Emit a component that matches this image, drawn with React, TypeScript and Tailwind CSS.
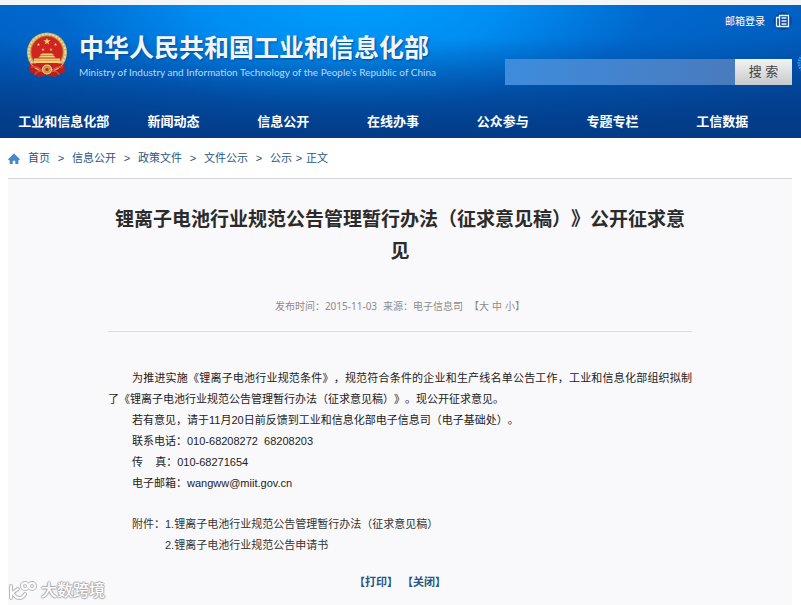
const NAV = ["工业和信息化部", "新闻动态", "信息公开", "在线办事", "公众参与", "专题专栏", "工信数据"];

const CRUMBS = ["首页", "信息公开", "政策文件", "文件公示", "公示"];

const ATTACHMENTS = [
  "1.锂离子电池行业规范公告管理暂行办法（征求意见稿）",
  "2.锂离子电池行业规范公告申请书",
];

const STAR = "0,-1 0.23,-0.31 0.95,-0.31 0.36,0.12 0.59,0.81 0,0.38 -0.59,0.81 -0.36,0.12 -0.95,-0.31 -0.23,-0.31";

function Emblem() {
  return (
    <svg viewBox="0 0 42 46" className="h-[46px] w-[42px] shrink-0" aria-hidden>
      <path d="M4 29 L3 40 L9 42 L13 45 L21 43 L29 45 L33 42 L39 40 L38 29Z" fill="#b81f1c" />
      <circle cx="21" cy="20.5" r="20" fill="#d3b069" />
      <circle cx="21" cy="20.5" r="18.3" fill="none" stroke="#efdfa8" strokeWidth="1.6" strokeDasharray="2 1.5" />
      <circle cx="21" cy="20" r="16" fill="#cf2420" stroke="#a8772b" strokeWidth="0.8" />
      <g fill="#f5cf78">
        <polygon points={STAR} transform="translate(21 9.5) scale(3.8)" />
        <polygon points={STAR} transform="translate(12.5 12.5) scale(1.7)" />
        <polygon points={STAR} transform="translate(29.5 12.5) scale(1.7)" />
        <polygon points={STAR} transform="translate(17 17.5) scale(1.7)" />
        <polygon points={STAR} transform="translate(25 17.5) scale(1.7)" />
        <path d="M14 23 L16 21.5 H26 L28 23Z" />
        <path d="M12.5 25.5 L14.5 23.5 H27.5 L29.5 25.5Z" />
        <path d="M8 26.5 H34 V31 H8Z" />
      </g>
      <path d="M8 28.5 H34" stroke="#dd9a4a" strokeWidth="0.8" />
      <path d="M5 31.5 H37 Q32 38 21 38 Q10 38 5 31.5Z" fill="#c4231f" />
      <circle cx="21" cy="37.5" r="4.5" fill="#cf9540" stroke="#ecd28a" strokeWidth="1.2" />
      <circle cx="21" cy="37.5" r="1.6" fill="#b5281d" />
      <path d="M5 35 Q12 34 15.5 39 Q10 39 9 43 M37 35 Q30 34 26.5 39 Q32 39 33 43" fill="none" stroke="#df4a30" strokeWidth="1.5" />
    </svg>
  );
}

function NewsIcon() {
  return (
    <svg viewBox="0 0 18 18" className="size-[18px]" fill="none" stroke="#e8f4ff" aria-hidden>
      <circle cx="9" cy="9" r="9" fill="#06489b" stroke="none" />
      <path d="M5.5 3.5 H14.5 V14.5 H3.5 Q2.5 14.5 2.5 13.5 V5.5 H5.5Z M5.5 5.5 V14" strokeWidth="1.3" />
      <path d="M7.5 6 H12.5 M7.5 9 H12.5 M7.5 12 H12.5" strokeWidth="1.3" />
    </svg>
  );
}

function HomeIcon() {
  return (
    <svg viewBox="0 0 12 12" className="mr-2 size-3" fill="#4788c9" aria-hidden>
      <path d="M6 0.5 L12 6.3 L11 7.2 H10.3 V11 H7.3 V7.8 H4.7 V11 H1.7 V7.2 H1 L0 6.3Z" />
    </svg>
  );
}

function Header() {
  return (
    <header className="relative overflow-hidden bg-[radial-gradient(62%_130%_at_44%_0%,#009efe_0%,#008df2_30%,#006dd4aa_60%,transparent_100%),linear-gradient(180deg,#0060c2_0%,#0054b0_50%,#04408f_100%)] text-white">
      {/* Darkens towards the nav bar */}
      <div className="bg-[linear-gradient(180deg,transparent_25%,#033a85_105%)]">
        <div className="flex h-[101px] justify-between pl-[26px] pr-[9px]">
          <div className="flex items-start gap-[11px] pt-[27px]">
            <Emblem />
            <div className="whitespace-nowrap">
              <div className="text-[25px] font-bold leading-[32px] text-[#f0f5fa] [text-shadow:1px_1px_2px_#064a91]">
                中华人民共和国工业和信息化部
              </div>
              <div className="font-['Lato'] text-[10px] leading-[16px] text-[#b6dcfb]">
                Ministry of Industry and Information Technology of the People's Republic of China
              </div>
            </div>
          </div>
          <div className="flex w-[287px] flex-col items-end pt-[7px]">
            <div className="flex items-center gap-[9px] text-[10px]">
              <a href="#mail">邮箱登录</a>
              <a href="#news" aria-label="新闻">
                <NewsIcon />
              </a>
            </div>
            <form className="mt-[29px] flex h-[26px] w-full">
              <input type="text" aria-label="搜索" className="min-w-0 flex-1 bg-[linear-gradient(90deg,#3e8cdd,#497bbd)] px-2 text-xs outline-none" />
              <button
                type="button"
                className="w-[57px] bg-[linear-gradient(180deg,#f3f3f3,#c6c9cc)] text-[13px] text-[#444]"
              >
                搜 索
              </button>
            </form>
          </div>
        </div>
        <nav className="grid h-8 grid-cols-7 items-center pl-[9px] pr-[24px] text-center text-[13px] font-bold">
          {NAV.map((item) => (
            <a key={item} href="#nav" className="whitespace-nowrap">
              {item}
            </a>
          ))}
        </nav>
      </div>
      <svg viewBox="0 0 4 24" className="absolute right-0 top-[46px] h-6 w-1" aria-hidden>
        <circle cx="11" cy="12" r="9" fill="none" stroke="#2f9af0" strokeWidth="3" strokeDasharray="1.5 1" />
      </svg>
    </header>
  );
}

function Breadcrumb() {
  return (
    <div className="ml-2 mr-[9px] flex h-[41px] items-center border-b border-[#d5d3dc] pt-px text-[11px] text-[#265682]">
      <HomeIcon />
      {CRUMBS.map((item, i) => (
        <span key={item} className="flex">
          <a href="#crumb">{item}</a>
          <span className={i === CRUMBS.length - 1 ? "w-[14px] text-center" : "w-[22px] text-center"}>&gt;</span>
        </span>
      ))}
      <span>正文</span>
    </div>
  );
}

function Article() {
  return (
    <main className="ml-2 mr-[9px] bg-[#f9f8fb] pb-[14px] pt-[25px]">
      <article className="mx-auto max-w-[584px]">
        <h1 className="text-center text-[19px] font-bold leading-[32px] text-[#2b2b2b]">
          锂离子电池行业规范公告管理暂行办法（征求意见稿）》公开征求意见
        </h1>
        <div className="flex justify-center gap-[6px] border-b border-[#dddce0] pb-[17px] pt-[30px] font-['Noto_Sans','Noto_Sans_CJK_SC',sans-serif] text-[10px] leading-[16px] text-[#8c8c8c]">
          <span>发布时间：2015-11-03</span>
          <span>来源：电子信息司</span>
          <span className="flex gap-[3px]">
            <button type="button">【大</button>
            <button type="button">中</button>
            <button type="button">小】</button>
          </span>
        </div>
        <div className="mt-9 text-justify text-[11px] leading-[21px] text-[#1c1c1c]">
          <p className="indent-6">
            为推进实施《锂离子电池行业规范条件》，规范符合条件的企业和生产线名单公告工作，工业和信息化部组织拟制了《锂离子电池行业规范公告管理暂行办法（征求意见稿）》。现公开征求意见。
          </p>
          <p className="indent-6">若有意见，请于11月20日前反馈到工业和信息化部电子信息司（电子基础处）。</p>
          <p className="indent-6">联系电话：010-68208272&nbsp;&nbsp;68208203</p>
          <p className="indent-6">传&nbsp;&nbsp;&nbsp;&nbsp;真：010-68271654</p>
          <p className="indent-6">电子邮箱：wangww@miit.gov.cn</p>
          <div className="mt-5 flex pl-6 text-[#333]">
            <span>附件：</span>
            <ul>
              {ATTACHMENTS.map((item) => (
                <li key={item}>
                  <a href="#file">{item}</a>
                </li>
              ))}
            </ul>
          </div>
        </div>
        <div className="mt-4 flex justify-center gap-1 text-[11px] font-bold leading-[20px] text-[#265682]">
          <button type="button">【打印】</button>
          <button type="button">【关闭】</button>
        </div>
      </article>
    </main>
  );
}

function Watermark() {
  return (
    <div className="absolute bottom-[5px] left-2 flex items-center gap-1 opacity-80">
      <svg viewBox="0 0 29 20" className="h-5 w-[29px]" fill="none" strokeLinecap="round" aria-hidden>
        <g stroke="#aaa8ad" strokeWidth="4">
          <path d="M3 5 V17 M10 8 L4 12 L8 16 Q14 19 17 13" />
          <circle cx="17" cy="5" r="3" />
          <circle cx="24" cy="5" r="3" />
        </g>
        <g stroke="#fff" strokeWidth="2">
          <path d="M3 5 V17 M10 8 L4 12 L8 16 Q14 19 17 13" />
          <circle cx="17" cy="5" r="3" />
          <circle cx="24" cy="5" r="3" />
        </g>
      </svg>
      <span className="text-[16px] font-medium leading-[20px] text-white [text-shadow:1px_0_1px_#999,-1px_0_1px_#999,0_1px_1px_#999,0_-1px_1px_#999]">
        大数跨境
      </span>
    </div>
  );
}

export default function App() {
  return (
    <div
      lang="zh-CN"
      className="relative border-t-[5px] border-[#f3f6f6] bg-white font-['Liberation_Sans','Noto_Sans_CJK_SC',sans-serif] [text-spacing-trim:space-all]"
    >
      <Header />
      <Breadcrumb />
      <Article />
      <Watermark />
    </div>
  );
}
